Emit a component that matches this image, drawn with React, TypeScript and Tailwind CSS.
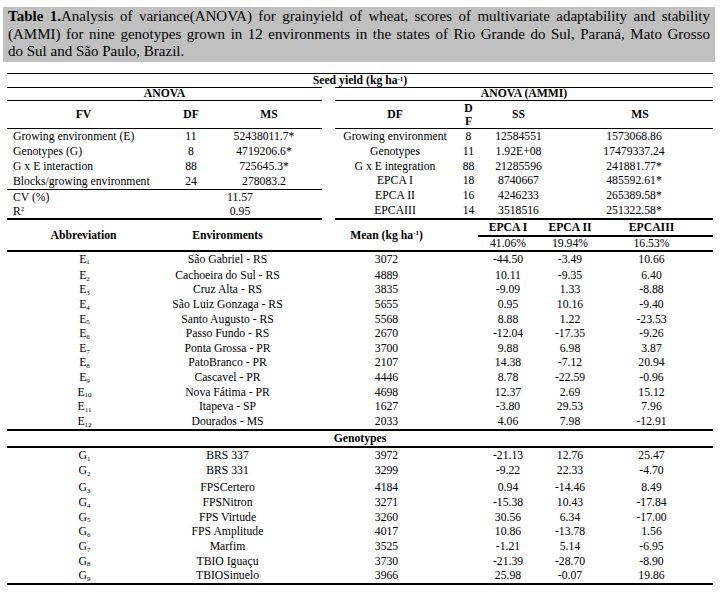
import React from "react";

const envs = [
  ["1", "São Gabriel - RS", "3072", "-44.50", "-3.49", "10.66"],
  ["2", "Cachoeira do Sul - RS", "4889", "10.11", "-9.35", "6.40"],
  ["3", "Cruz Alta - RS", "3835", "-9.09", "1.33", "-8.88"],
  ["4", "São Luiz Gonzaga - RS", "5655", "0.95", "10.16", "-9.40"],
  ["5", "Santo Augusto - RS", "5568", "8.88", "1.22", "-23.53"],
  ["6", "Passo Fundo - RS", "2670", "-12.04", "-17.35", "-9.26"],
  ["7", "Ponta Grossa - PR", "3700", "9.88", "6.98", "3.87"],
  ["8", "PatoBranco - PR", "2107", "14.38", "-7.12", "20.94"],
  ["9", "Cascavel - PR", "4446", "8.78", "-22.59", "-0.96"],
  ["10", "Nova Fátima - PR", "4698", "12.37", "2.69", "15.12"],
  ["11", "Itapeva - SP", "1627", "-3.80", "29.53", "7.96"],
  ["12", "Dourados - MS", "2033", "4.06", "7.98", "-12.91"],
];

const gens = [
  ["1", "BRS 337", "3972", "-21.13", "12.76", "25.47"],
  ["2", "BRS 331", "3299", "-9.22", "22.33", "-4.70"],
  ["3", "FPSCertero", "4184", "0.94", "-14.46", "8.49"],
  ["4", "FPSNitron", "3271", "-15.38", "10.43", "-17.84"],
  ["5", "FPS Virtude", "3260", "30.56", "6.34", "-17.00"],
  ["6", "FPS Amplitude", "4017", "10.86", "-13.78", "1.56"],
  ["7", "Marfim", "3525", "-1.21", "5.14", "-6.95"],
  ["8", "TBIO Iguaçu", "3730", "-21.39", "-28.70", "-8.90"],
  ["9", "TBIOSinuelo", "3966", "25.98", "-0.07", "19.86"],
];

const anovaLeft = [
  ["Growing environment (E)", "11", "52438011.7*"],
  ["Genotypes (G)", "8", "4719206.6*"],
  ["G x E interaction", "88", "725645.3*"],
  ["Blocks/growing environment", "24", "278083.2"],
];

const anovaRight = [
  ["Growing environment", "8", "12584551", "1573068.86"],
  ["Genotypes", "11", "1.92E+08", "17479337.24"],
  ["G x E integration", "88", "21285596", "241881.77*"],
  ["EPCA I", "18", "8740667", "485592.61*"],
  ["EPCA II", "16", "4246233", "265389.58*"],
  ["EPCAIII", "14", "3518516", "251322.58*"],
];

const lowerCols = "grid grid-cols-[153px_135px_183px_60px_64px_111px]";

function DataRow({ r, letter, h }: { r: string[]; letter: string; h: string }) {
  return (
    <div className={`${lowerCols} ${h} items-center leading-[13px]`}>
      <div className="text-center pl-[2px]">
        {letter}
        <sub className="text-[7px]">{r[0]}</sub>
      </div>
      <div className="text-center">{r[1]}</div>
      <div className="text-center">{r[2]}</div>
      <div className="text-center">{r[3]}</div>
      <div className="text-center">{r[4]}</div>
      <div className="text-center pr-[12px]">{r[5]}</div>
    </div>
  );
}

export default function App() {
  return (
    <div className="w-[722px] h-[595px] bg-white text-black font-['Liberation_Serif',serif] overflow-hidden">
      <div className="pt-[7px] pl-[3px]">
        <div className="w-[712px] h-[55px] bg-[#c0c0c0] px-[5px] pt-[1px] text-[15px] leading-[17.5px]">
          <div className="text-justify [text-align-last:justify] whitespace-nowrap">
            <b>Table 1.</b>Analysis of variance(ANOVA) for grainyield of wheat, scores of multivariate adaptability and stability
          </div>
          <div className="text-justify [text-align-last:justify] whitespace-nowrap">
            (AMMI) for nine genotypes grown in 12 environments in the states of Rio Grande do Sul, Paraná, Mato Grosso
          </div>
          <div className="whitespace-nowrap">do Sul and São Paulo, Brazil.</div>
        </div>
      </div>

      <div className="ml-[7px] w-[706px] mt-[11px] text-[11.7px]">
        <div className="border-t border-black h-[14px] leading-[14px] text-center font-bold">
          Seed yield (kg ha<sup className="text-[7px]">-1</sup>)
        </div>
        <div className="flex gap-[13px]">
          {/* Left ANOVA */}
          <div className="w-[315px]">
            <div className="border-t border-black h-[13px] leading-[12px] text-center font-bold">ANOVA</div>
            <div className="border-t border-black h-[28px] grid grid-cols-[153px_62px_100px] items-center font-bold">
              <div className="text-center">FV</div>
              <div className="text-center">DF</div>
              <div className="text-center pr-[6px]">MS</div>
            </div>
            <div className="border-t border-black">
              {anovaLeft.map((r) => (
                <div key={r[0]} className="h-[15px] grid grid-cols-[153px_62px_100px] items-center leading-[13px]">
                  <div className="pl-[6px] whitespace-nowrap">{r[0]}</div>
                  <div className="text-center">{r[1]}</div>
                  <div className="text-center pr-[16px]">{r[2]}</div>
                </div>
              ))}
            </div>
            <div className="border-t border-black">
              <div className="h-[14px] grid grid-cols-[153px_162px] items-center leading-[13px]">
                <div className="pl-[6px]">CV (%)</div>
                <div className="text-center pr-[2px]">11.57</div>
              </div>
              <div className="h-[14px] grid grid-cols-[153px_162px] items-center leading-[13px]">
                <div className="pl-[6px]">
                  R<sup className="text-[7px]">2</sup>
                </div>
                <div className="text-center pr-[2px]">0.95</div>
              </div>
            </div>
            <div className="border-t-2 border-black" />
          </div>

          {/* Right ANOVA (AMMI) */}
          <div className="w-[378px]">
            <div className="border-t border-black h-[13px] leading-[12px] text-center font-bold">ANOVA (AMMI)</div>
            <div className="border-t border-black h-[28px] grid grid-cols-[120px_27px_73px_158px] items-center font-bold">
              <div className="text-center">DF</div>
              <div className="text-center leading-[13px]">
                <div>D</div>
                <div>F</div>
              </div>
              <div className="text-center">SS</div>
              <div className="text-center pl-[12px]">MS</div>
            </div>
            <div className="border-t border-black">
              {anovaRight.map((r) => (
                <div key={r[0]} className="h-[14.85px] grid grid-cols-[120px_27px_73px_158px] items-center leading-[13px]">
                  <div className="text-center whitespace-nowrap">{r[0]}</div>
                  <div className="text-center">{r[1]}</div>
                  <div className="text-center">{r[2]}</div>
                  <div className="text-center">{r[3]}</div>
                </div>
              ))}
            </div>
            <div className="border-t-2 border-black" />
          </div>
        </div>

        {/* Lower header */}
        <div className={`${lowerCols} grid-rows-[15px_15px] font-bold leading-[13px]`}>
          <div className="row-span-2 flex items-center justify-center">Abbreviation</div>
          <div className="row-span-2 flex items-center justify-center">Environments</div>
          <div className="row-span-2 flex items-center justify-center">
            <span>
              Mean (kg ha<sup className="text-[7px]">-1</sup>)
            </span>
          </div>
          <div className="flex items-center justify-center">EPCA I</div>
          <div className="flex items-center justify-center">EPCA II</div>
          <div className="flex items-center justify-center pr-[12px]">EPCAIII</div>
          <div className="border-t-2 border-black flex items-center justify-center font-normal">41.06%</div>
          <div className="border-t-2 border-black flex items-center justify-center font-normal">19.94%</div>
          <div className="border-t-2 border-black flex items-center justify-center font-normal pr-[12px]">16.53%</div>
        </div>
        <div className="border-t-2 border-black" />

        {/* Environments */}
        <div>
          {envs.map((r, i) => (
            <DataRow key={r[0]} r={r} letter="E" h={i === 0 ? "h-[16px] pb-[2px]" : "h-[14.6px]"} />
          ))}
        </div>
        <div className="border-t-2 border-black h-[17.5px] flex items-center justify-center font-bold leading-[13px]">
          Genotypes
        </div>
        <div className="border-t-2 border-black">
          {gens.map((r, i) => (
            <DataRow
              key={r[0]}
              r={r}
              letter="G"
              h={i === 0 ? "h-[15px]" : i === 1 ? "h-[17.5px] pb-[2.5px]" : "h-[14.67px]"}
            />
          ))}
        </div>
        <div className="border-t-2 border-black" />
      </div>
    </div>
  );
}
